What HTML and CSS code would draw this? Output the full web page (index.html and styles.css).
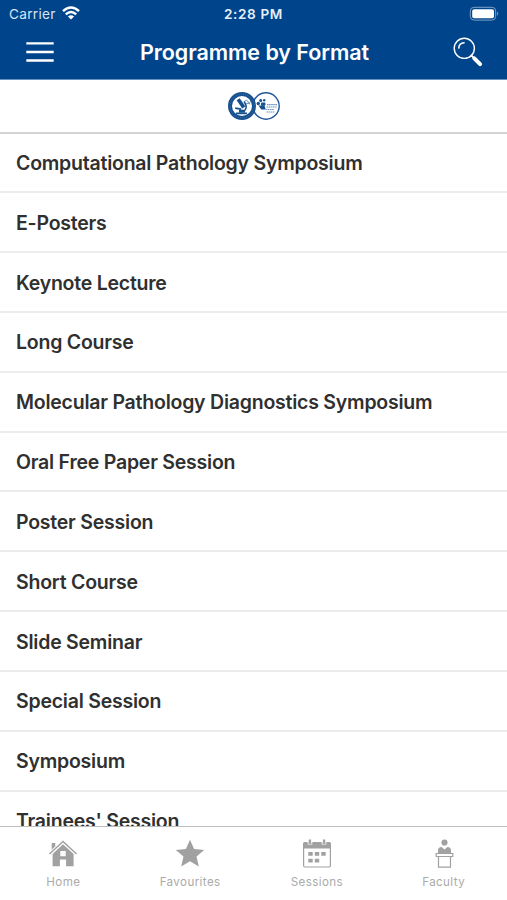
FILE: index.html
```html
<!DOCTYPE html>
<html lang="en">
<head>
<meta charset="utf-8">
<title>Programme by Format</title>
<link rel="stylesheet" href="styles.css">
</head>
<body>
<div class="app">
  <header class="header">
    <div class="status">
      <div class="carrier"><span>Carrier</span>
        <svg width="18" height="14" viewBox="0 0 18 14" fill="none" stroke="#fff" stroke-width="2.5"><path d="M1 5.2Q9-2.2 17 5.2M3.8 8.4Q9 3.6 14.2 8.4"/><path d="M9 13.6L5.9 10.6Q9 7.8 12.1 10.6Z" fill="#fff" stroke="none"/></svg>
      </div>
      <time class="time">2:28 PM</time>
      <svg class="battery" width="32" height="16" viewBox="0 0 32 16"><rect x="1.3" y="1.3" width="25.4" height="12.8" rx="3.8" fill="none" stroke="#7fa1c8" stroke-width="1"/><rect x="3.2" y="3.2" width="21.8" height="9" rx="2" fill="#fff"/><path d="M28.2 5.6q2.2 2.1 0 4.2z" fill="#7fa1c8"/></svg>
    </div>
    <div class="navbar">
      <svg class="menu" width="28" height="22" viewBox="0 0 28 22" stroke="#fff" stroke-width="2.4"><path d="M.3 2.4h27.4M.3 11h27.4M.3 19.5h27.4"/></svg>
      <h1 class="title">Programme by Format</h1>
      <svg class="search" width="30" height="30" viewBox="0 0 30 30" fill="none" stroke="#fff" stroke-linecap="round"><circle cx="11.3" cy="11.3" r="10.1" stroke-width="1.4"/><path d="M5.8 11.1Q6 6.3 11.1 5.8" stroke-width="1.5"/><path d="M18.3 18.4l3 3" stroke-width="2"/><path d="M21.3 21.3l5.8 5.8" stroke-width="4"/></svg>
    </div>
  </header>
  <div class="brand">
    <svg width="54" height="30" viewBox="0 0 54 30">
      <circle cx="39" cy="15" r="13.2" fill="#fff" stroke="#23589b" stroke-width="1.4"/>
      <circle cx="15" cy="15" r="12" fill="#fff" stroke="#17508f" stroke-width="4"/>
      <circle cx="15" cy="15" r="12" fill="none" stroke="#4f7cb1" stroke-width=".7" stroke-dasharray="1 1.2"/>
      <g fill="none" stroke="#17508f"><path d="M11.2 8.3l5.6 8.2" stroke-width="3.8"/><path d="M17 10.5q4.2 5.5.2 9.8" stroke-width="1.5"/><path d="M8.2 17.2l6 .9M9 22.3h11" stroke-width="1.7"/><path d="M12 20.2h6" stroke-width="3"/><path d="M17.5 10.5q2-2.6 3.4 0t3 0M19 13q2-2 4 0" stroke-width=".7"/></g>
      <g fill="#17508f"><circle cx="31.3" cy="12.5" r="1.7"/><circle cx="33.7" cy="9.6" r="1.5"/><circle cx="37.2" cy="9.2" r="1.2"/><rect x="34" y="11.4" width="4.4" height="3.3" rx="1"/><path d="M31.5 14.6h6l1.2 3.8h-4.5z"/></g>
      <path d="M40 13.6h10M39.5 16h10M38.8 18.5h8.2M39.5 21h8" stroke="#6f94c0" stroke-width="1.1" stroke-dasharray="1.6 .5"/>
    </svg>
  </div>
  <main class="viewport">
    <ul class="list">
      <li>Computational Pathology Symposium</li>
      <li>E-Posters</li>
      <li>Keynote Lecture</li>
      <li>Long Course</li>
      <li>Molecular Pathology Diagnostics Symposium</li>
      <li>Oral Free Paper Session</li>
      <li>Poster Session</li>
      <li>Short Course</li>
      <li>Slide Seminar</li>
      <li>Special Session</li>
      <li>Symposium</li>
      <li>Trainees' Session</li>
    </ul>
  </main>
  <nav class="tabs">
    <a class="tab"><svg width="30" height="30" viewBox="0 0 30 30" fill="#a1a1a1"><path d="M3.7 4h3.6v3.3L3.7 10.7z"/><path d="M1.5 15L15 2.5 28.5 15" fill="none" stroke="#a1a1a1" stroke-width="1.5"/><path fill-rule="evenodd" d="M15 5.2L25.6 15v12.3h-7.5v-6.9h-6.2v6.9H4.6V15zM12.3 12h5.4v5.2h-5.4z"/></svg><span>Home</span></a>
    <a class="tab"><svg width="30" height="30" viewBox="0 0 30 30" fill="#a1a1a1"><path d="M15 .8l4.1 9.3 10.1.9-7.7 6.6 2.3 9.9L15 22.3l-8.8 5.2 2.3-9.9L.8 11l10.1-.9z"/></svg><span>Favourites</span></a>
    <a class="tab"><svg width="30" height="30" viewBox="0 0 30 30" fill="#a1a1a1"><path d="M2.4 3h3.2v3h4.8V3h9.2v3h4.8V3h3.2q1.4 0 1.4 1.5v5H1v-5Q1 3 2.4 3z"/><path d="M6.7.6h2.4v4.2H6.7zM20.9.6h2.4v4.2h-2.4z"/><rect x="1.6" y="5" width="26.8" height="23" rx="1.2" fill="none" stroke="#a1a1a1" stroke-width="1.2"/><path d="M6.3 13h4.4v3.8H6.3zM12.8 13h4.4v3.8h-4.4zM19.3 13h4.4v3.8h-4.4zM6.3 19.7h4.4v3.8H6.3zM12.8 19.7h4.4v3.8h-4.4z"/></svg><span>Sessions</span></a>
    <a class="tab"><svg width="30" height="30" viewBox="0 0 30 30" fill="#a1a1a1"><circle cx="15.5" cy="3.5" r="3.1"/><path d="M9 14.4v-3q0-3 3.5-3.4l3 2.6L18.5 8q3.5.4 3.5 3.4v3z"/><path d="M7.2 14.5h16.6v3H7.2zM9.5 17.5h12v10.6h-12z" fill="#fff" stroke="#a1a1a1" stroke-width="1.2"/></svg><span>Faculty</span></a>
  </nav>
</div>
</body>
</html>
```
FILE: styles.css
```css
* { box-sizing: border-box; }
body { margin: 0; font-family: Inter, "Liberation Sans", sans-serif; background: #fff; }
svg { display: block; flex: none; }
.app { height: 900px; display: flex; flex-direction: column; overflow: hidden; }
.header { height: 80px; flex: none; background: #00458b; color: #fff; border-bottom: 1px solid #6690bd; }
.status { height: 27px; display: grid; grid-template-columns: 1fr auto 1fr; align-items: center; padding: 0 6px 0 9px; }
.carrier { display: flex; align-items: center; gap: 6px; font-size: 13.6px; letter-spacing: .3px; color: #d6e4f4; }
.carrier svg { margin-top: -1px; }
.time { font-size: 13.6px; font-weight: 600; letter-spacing: .6px; margin-left: -3px; color: #e5effa; }
.battery { justify-self: end; }
.navbar { height: 52px; display: grid; grid-template-columns: 1fr auto 1fr; align-items: center; padding: 0 24px 2px 26px; }
.title { margin: 0; font-size: 21.5px; font-weight: 600; letter-spacing: -.05px; white-space: nowrap; }
.search { justify-self: end; }
.brand { height: 54px; flex: none; display: flex; justify-content: center; align-items: center; border-bottom: 2px solid #d4d4d4; }
.viewport { flex: 1; min-height: 0; overflow: hidden; }
.list { list-style: none; margin: -.6px 0 0; padding: 0; }
.list li { height: 59.85px; padding: 1px 16px 0; display: flex; align-items: center; border-bottom: 2px solid #ececec; font-size: 19.5px; font-weight: 600; letter-spacing: -.23px; color: #303030; white-space: nowrap; }
.tabs { height: 74px; flex: none; display: grid; grid-template-columns: repeat(4, 1fr); border-top: 1px solid #bdbdbd; background: #fff; }
.tab { display: flex; flex-direction: column; align-items: center; padding-top: 12px; gap: 6px; font-size: 11.6px; line-height: 15px; letter-spacing: .4px; color: #aaa; }
```
